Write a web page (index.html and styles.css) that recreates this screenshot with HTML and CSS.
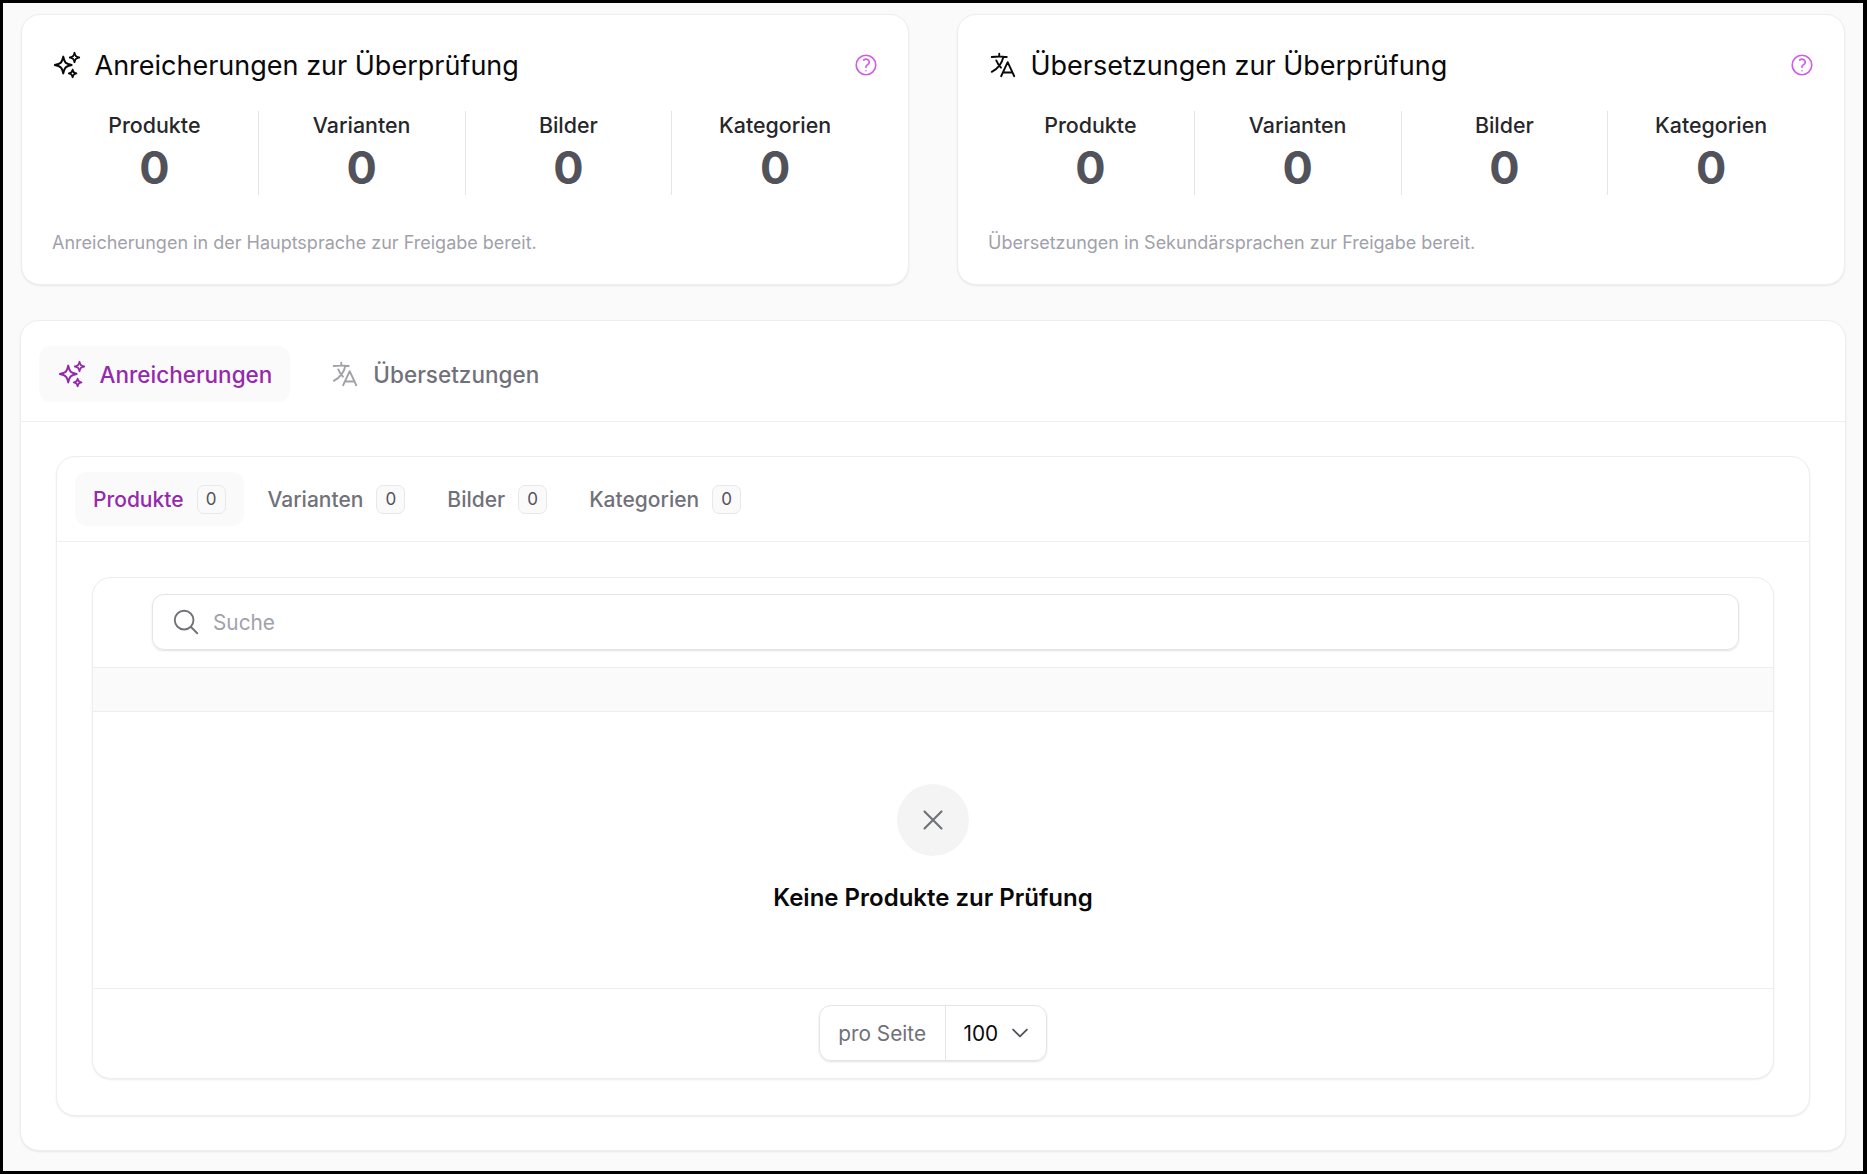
FILE: index.html
```html
<!doctype html>

<html lang="de">
<head>
  <meta charset="utf-8">

  <title>Überprüfung</title>

  <link rel="stylesheet" href="styles.css">
</head>

<body>
  <svg class="icon-defs" width="0" height="0">
    <symbol id="i-sparkles" viewBox="0 0 24 24">
      <path d="M9.813 15.904 9 18.75l-.813-2.846a4.5 4.5 0 0 0-3.09-3.09L2.25 12l2.846-.813a4.5 4.5 0 0 0 3.09-3.09L9 5.25l.813 2.846a4.5 4.5 0 0 0 3.09 3.09L15.75 12l-2.846.813a4.5 4.5 0 0 0-3.09 3.09ZM18.259 8.715 18 9.75l-.259-1.035a3.375 3.375 0 0 0-2.455-2.456L14.25 6l1.036-.259a3.375 3.375 0 0 0 2.455-2.456L18 2.25l.259 1.035a3.375 3.375 0 0 0 2.456 2.456L21.75 6l-1.035.259a3.375 3.375 0 0 0-2.456 2.456ZM16.894 20.567 16.5 21.75l-.394-1.183a2.25 2.25 0 0 0-1.423-1.423L13.5 18.75l1.183-.394a2.25 2.25 0 0 0 1.423-1.423l.394-1.183.394 1.183a2.25 2.25 0 0 0 1.423 1.423l1.183.394-1.183.394a2.25 2.25 0 0 0-1.423 1.423Z"/>
    </symbol>
    <symbol id="i-language" viewBox="0 0 24 24">
      <path d="m10.5 21 5.25-11.25L21 21m-9-3h7.5M3 5.621a48.474 48.474 0 0 1 6-.371m0 0c1.12 0 2.233.038 3.334.114M9 5.25V3m3.334 2.364C11.176 10.658 7.69 15.08 3 17.502m9.334-12.138c.896.061 1.785.147 2.666.257m-4.589 8.495a18.023 18.023 0 0 1-3.827-5.802"/>
    </symbol>
    <symbol id="i-help" viewBox="0 0 24 24">
      <path d="M9.879 7.519c1.171-1.025 3.071-1.025 4.242 0 1.172 1.025 1.172 2.687 0 3.712-.203.179-.43.326-.67.442-.745.361-1.45.999-1.45 1.827v.75M21 12a9 9 0 1 1-18 0 9 9 0 0 1 18 0Zm-9 5.25h.008v.008H12v-.008Z"/>
    </symbol>
  </svg>

  <div class="summary">
    <section class="card summary-card">
      <div class="summary-head">
        <svg class="icon summary-icon"><use href="#i-sparkles"/></svg>
        <h2>Anreicherungen zur Überprüfung</h2>
        <svg class="icon help-icon"><use href="#i-help"/></svg>
      </div>
      <div class="stats">
        <div class="stat"><span class="stat-label">Produkte</span><span class="stat-value">0</span></div>
        <div class="stat"><span class="stat-label">Varianten</span><span class="stat-value">0</span></div>
        <div class="stat"><span class="stat-label">Bilder</span><span class="stat-value">0</span></div>
        <div class="stat"><span class="stat-label">Kategorien</span><span class="stat-value">0</span></div>
      </div>
      <p class="summary-note">Anreicherungen in der Hauptsprache zur Freigabe bereit.</p>
    </section>

    <section class="card summary-card">
      <div class="summary-head">
        <svg class="icon summary-icon"><use href="#i-language"/></svg>
        <h2>Übersetzungen zur Überprüfung</h2>
        <svg class="icon help-icon"><use href="#i-help"/></svg>
      </div>
      <div class="stats">
        <div class="stat"><span class="stat-label">Produkte</span><span class="stat-value">0</span></div>
        <div class="stat"><span class="stat-label">Varianten</span><span class="stat-value">0</span></div>
        <div class="stat"><span class="stat-label">Bilder</span><span class="stat-value">0</span></div>
        <div class="stat"><span class="stat-label">Kategorien</span><span class="stat-value">0</span></div>
      </div>
      <p class="summary-note">Übersetzungen in Sekundärsprachen zur Freigabe bereit.</p>
    </section>
  </div>

  <section class="card review">
    <div class="main-tabs">
      <a class="main-tab active" href="#">
        <svg class="icon main-tab-icon"><use href="#i-sparkles"/></svg>
        Anreicherungen
      </a>
      <a class="main-tab" href="#">
        <svg class="icon main-tab-icon"><use href="#i-language"/></svg>
        Übersetzungen
      </a>
    </div>

    <div class="review-body">
      <div class="card queue">
        <div class="sub-tabs">
          <a class="sub-tab active" href="#">Produkte <span class="badge">0</span></a>
          <a class="sub-tab" href="#">Varianten <span class="badge">0</span></a>
          <a class="sub-tab" href="#">Bilder <span class="badge">0</span></a>
          <a class="sub-tab" href="#">Kategorien <span class="badge">0</span></a>
        </div>

        <div class="queue-body">
          <div class="card list">
            <div class="list-search">
              <div class="search-box">
                <svg class="icon search-icon" viewBox="0 0 24 24"><path d="m21 21-5.197-5.197m0 0A7.5 7.5 0 1 0 5.196 5.196a7.5 7.5 0 0 0 10.607 10.607Z"/></svg>
                <input class="search-input" placeholder="Suche">
              </div>
            </div>
            <div class="list-head"></div>
            <div class="list-empty">
              <div class="empty-circle">
                <svg class="icon empty-icon" viewBox="0 0 24 24"><path d="M6 18 18 6M6 6l12 12"/></svg>
              </div>
              <div class="empty-text">Keine Produkte zur Prüfung</div>
            </div>
            <div class="list-foot">
              <div class="per-page">
                <span class="per-page-label">pro Seite</span>
                <span class="per-page-value">100
                  <svg class="icon chevron" viewBox="0 0 24 24"><path d="m19.5 8.25-7.5 7.5-7.5-7.5"/></svg>
                </span>
              </div>
            </div>
          </div>
        </div>
      </div>
    </div>
  </section>
</body>
</html>
```

FILE: styles.css
```css
* {
  box-sizing: border-box;
}

html,
body {
  height: 1174px;
}

body {
  margin: 0;
  padding: 11px 18px 20px;
  border-style: solid;
  border-color: #000;
  border-width: 3px 4px 3px 3px;
  background: #fafafa;
  color: #09090b;
  font-family: 'Inter', 'Liberation Sans', sans-serif;
  overflow: hidden;
}

a {
  text-decoration: none;
}

.icon-defs {
  position: absolute;
}

.icon {
  display: block;
  flex: none;
  fill: none;
  stroke: currentColor;
  stroke-width: 1.5;
  stroke-linecap: round;
  stroke-linejoin: round;
}

.card {
  background: #fff;
  border: 1px solid #eeeeef;
  border-radius: 19px;
  box-shadow: 0 1px 2px rgba(0,0,0,0.08);
}

.summary {
  display: grid;
  grid-template-columns: 888px 888px;
  column-gap: 48px;
}

.summary-card {
  height: 271px;
  padding: 29px 30px 0 29px;
}

.summary-head {
  display: flex;
  align-items: center;
  height: 42px;
  padding-left: 1px;
}

.summary-head h2 {
  flex: 1;
  margin: 0 0 0 12.5px;
  font-size: 27px;
  font-weight: 400;
}

.summary-icon {
  width: 30px;
  height: 30px;
}

.help-icon {
  width: 26px;
  height: 26px;
  margin-right: -1px;
  color: #d05ce8;
}

.stats {
  display: grid;
  grid-template-columns: repeat(4, 1fr);
  margin-top: 25px;
}

.stat {
  display: flex;
  flex-direction: column;
  align-items: center;
  height: 84px;
  border-left: 1px solid #e4e4e7;
}

.stat:first-child {
  border-left: none;
}

.stat-label {
  margin-top: 1px;
  font-size: 21.4px;
  font-weight: 500;
  line-height: 26px;
  color: #27272a;
}

.stat-value {
  margin-top: 3px;
  font-size: 45px;
  font-weight: 700;
  line-height: 54px;
  color: #52525b;
}

.summary-note {
  margin: 33.5px 0 0 1px;
  font-size: 18px;
  line-height: 28px;
  color: #a1a1aa;
}

.review {
  height: 831px;
  margin: 35px -1px 0;
}

.main-tabs {
  display: flex;
  gap: 23px;
  height: 101px;
  padding: 25px 18px 0;
  border-bottom: 1px solid #eeeeef;
}

.main-tab {
  display: flex;
  align-items: center;
  gap: 13px;
  height: 56px;
  padding: 0 17.5px;
  border-radius: 12px;
  font-size: 22.5px;
  font-weight: 500;
  color: #71717a;
}

.main-tab.active {
  background: #fafafa;
  color: #9529ad;
}

.main-tab-icon {
  width: 30px;
  height: 30px;
}

.main-tab:not(.active) .main-tab-icon {
  color: #a1a1aa;
}

.review-body {
  padding: 34px 35px 35px;
}

.queue {
  height: 660px;
}

.sub-tabs {
  display: flex;
  gap: 6px;
  height: 85px;
  padding: 15px 18px 0;
  border-bottom: 1px solid #eeeeef;
}

.sub-tab {
  display: flex;
  align-items: center;
  gap: 13px;
  height: 54px;
  padding: 0 18px;
  border-radius: 12px;
  font-size: 21px;
  font-weight: 500;
  color: #71717a;
}

.sub-tab.active {
  background: #fafafa;
  color: #9529ad;
}

.badge {
  display: flex;
  align-items: center;
  justify-content: center;
  width: 29px;
  height: 29px;
  border: 1px solid #e8e8ea;
  border-radius: 7px;
  background: #fafafa;
  font-size: 17px;
  font-weight: 400;
  color: #52525b;
}

.queue-body {
  padding: 35px;
}

.list {
  height: 502px;
}

.list-search {
  height: 90px;
  padding: 16px 34px 0 59px;
  border-bottom: 1px solid #eeeeef;
}

.search-box {
  display: flex;
  align-items: center;
  height: 56px;
  padding: 0 18px;
  border: 1px solid #e4e4e7;
  border-radius: 12px;
  box-shadow: 0 1px 2px rgba(0,0,0,0.12);
}

.search-icon {
  width: 30px;
  height: 30px;
  color: #71717a;
}

.search-input {
  flex: 1;
  margin-left: 12px;
  border: none;
  outline: none;
  padding: 0;
  font-family: inherit;
  font-size: 20.8px;
  background: transparent;
}

.search-input::placeholder {
  color: #a1a1aa;
}

.list-head {
  height: 44px;
  background: #fafafa;
  border-bottom: 1px solid #eeeeef;
}

.list-empty {
  display: flex;
  flex-direction: column;
  align-items: center;
  height: 277px;
  padding-top: 72px;
  border-bottom: 1px solid #eeeeef;
}

.empty-circle {
  display: flex;
  align-items: center;
  justify-content: center;
  width: 72px;
  height: 72px;
  border-radius: 50%;
  background: #f4f4f5;
}

.empty-icon {
  width: 34px;
  height: 34px;
  color: #71717a;
}

.empty-text {
  margin-top: 26px;
  font-size: 24px;
  font-weight: 600;
  line-height: 32px;
}

.list-foot {
  display: flex;
  justify-content: center;
  padding-top: 16px;
}

.per-page {
  display: flex;
  height: 56px;
  border: 1px solid #e4e4e7;
  border-radius: 12px;
  box-shadow: 0 1px 2px rgba(0,0,0,0.12);
  font-size: 20.8px;
}

.per-page-label {
  display: flex;
  align-items: center;
  padding: 0 18.5px;
  border-right: 1px solid #e4e4e7;
  color: #71717a;
}

.per-page-value {
  display: flex;
  align-items: center;
  gap: 11px;
  padding: 0 15px 0 18px;
}

.chevron {
  width: 22px;
  height: 22px;
  stroke-width: 2;
  color: #52525b;
}
```
